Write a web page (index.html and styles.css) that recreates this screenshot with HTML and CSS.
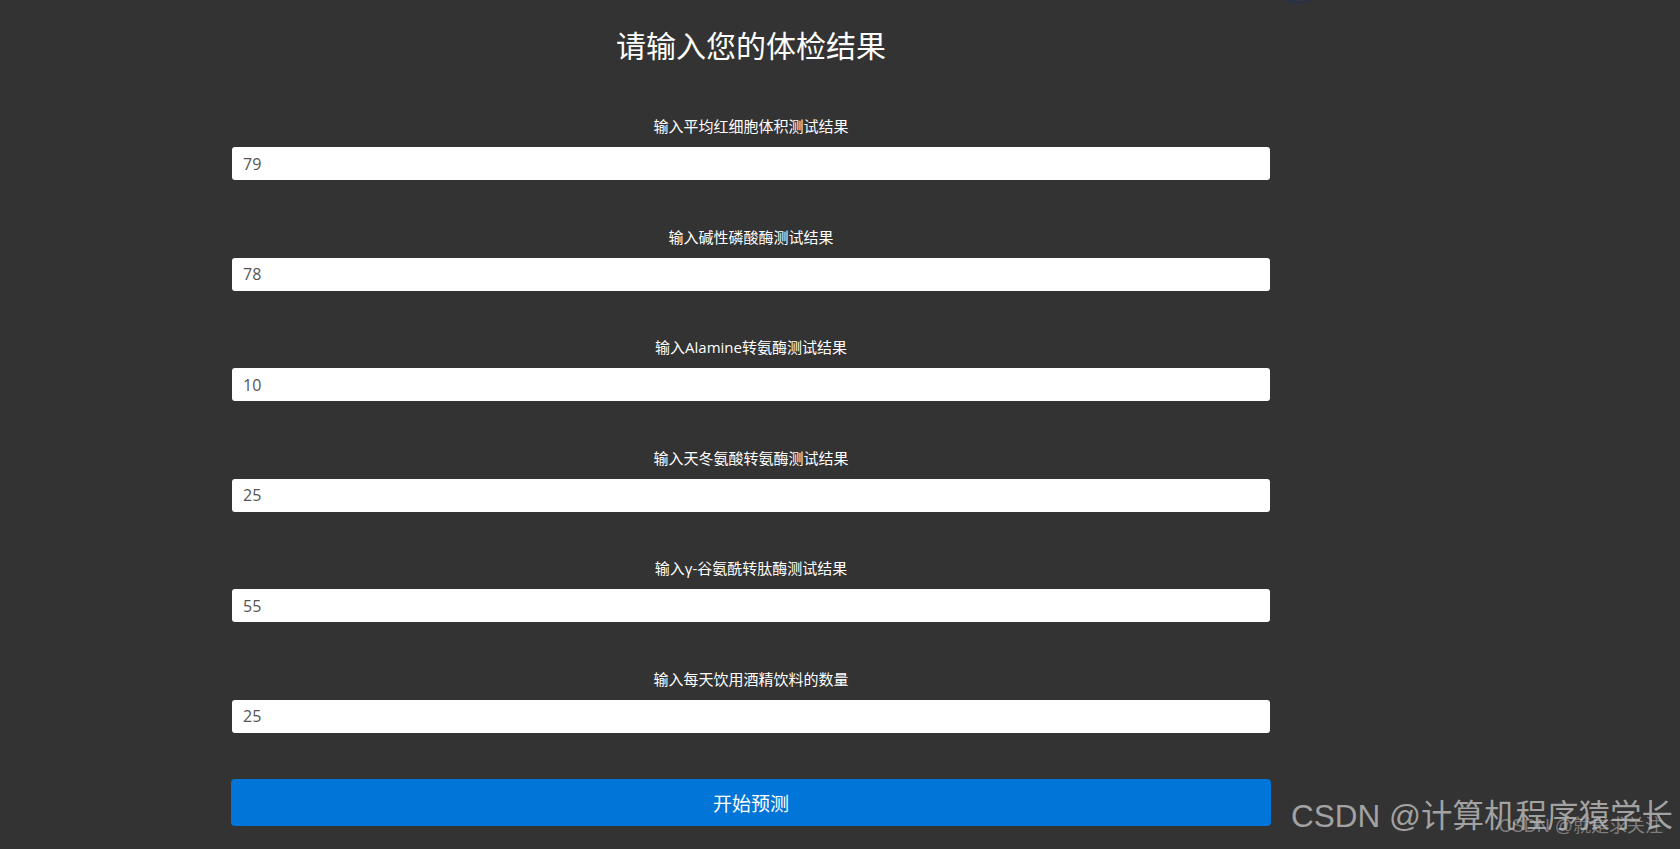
FILE: index.html
```html
<!DOCTYPE html>
<html lang="zh-CN">
<head>
  <meta charset="UTF-8">
  <title>体检结果预测</title>
  <link rel="stylesheet" href="styles.css">
</head>
<body>

<div class="avatar"></div>

<div class="container">
  <h1 class="title">请输入您的体检结果</h1>

  <form class="check-form">
    <div class="field">
      <label>输入平均红细胞体积测试结果</label>
      <input type="text" value="79">
    </div>
    <div class="field">
      <label>输入碱性磷酸酶测试结果</label>
      <input type="text" value="78">
    </div>
    <div class="field">
      <label>输入Alamine转氨酶测试结果</label>
      <input type="text" value="10">
    </div>
    <div class="field">
      <label>输入天冬氨酸转氨酶测试结果</label>
      <input type="text" value="25">
    </div>
    <div class="field">
      <label>输入γ-谷氨酰转肽酶测试结果</label>
      <input type="text" value="55">
    </div>
    <div class="field">
      <label>输入每天饮用酒精饮料的数量</label>
      <input type="text" value="25">
    </div>
    <button type="button" class="btn-predict">开始预测</button>
  </form>
</div>

<div class="watermark">
  <span class="wm-main">CSDN @计算机程序猿学长</span>
  <span class="wm-sub">CSDN @就是求关注</span>
</div>

</body>
</html>
```

FILE: styles.css
```css
* {
  box-sizing: border-box;
}

body {
  margin: 0;
  background: #333333;
  font-family: "Open Sans", "Noto Sans CJK SC", sans-serif;
  color: #fff;
  height: 849px;
  overflow: hidden;
  position: relative;
}

.container {
  width: 1038px;
  margin-left: 232px;
  padding-top: 28px;
}

.title {
  margin: 0 0 52px;
  font-size: 30px;
  font-weight: 400;
  line-height: 36px;
  text-align: center;
}

.field {
  margin-bottom: 46.5px;
}

.field label {
  display: block;
  font-size: 15px;
  line-height: 20px;
  text-align: center;
  margin-bottom: 11px;
}

.field input {
  display: block;
  width: 100%;
  height: 33px;
  border: none;
  border-radius: 3px;
  padding: 0 11px;
  font-family: "Open Sans", "Noto Sans CJK SC", sans-serif;
  font-size: 16px;
  color: #555;
  background: #fff;
  outline: none;
}

.btn-predict {
  display: block;
  width: calc(100% + 2px);
  margin-left: -1px;
  height: 47px;
  border: none;
  border-radius: 4px;
  background: #0275d8;
  color: #fff;
  font-family: "Noto Sans CJK SC", sans-serif;
  font-size: 19px;
  cursor: pointer;
}

/* partial avatar ring at top edge */
.avatar {
  position: absolute;
  left: 1278px;
  top: -38px;
  width: 42px;
  height: 42px;
  border-radius: 50%;
  border: 3px solid #2b3046;
  background: #3a3a3a;
}

.watermark {
  position: absolute;
  right: 7px;
  bottom: 15px;
  pointer-events: none;
}

.wm-main {
  display: block;
  font-family: "Liberation Sans", "Noto Sans CJK SC", sans-serif;
  font-size: 31.5px;
  line-height: 36px;
  color: rgba(200, 200, 200, 0.75);
  white-space: nowrap;
}

.wm-sub {
  position: absolute;
  right: 10px;
  top: 13px;
  font-family: "Liberation Sans", "Noto Sans CJK SC", sans-serif;
  font-size: 18px;
  color: rgba(190, 190, 190, 0.55);
  white-space: nowrap;
}
```
